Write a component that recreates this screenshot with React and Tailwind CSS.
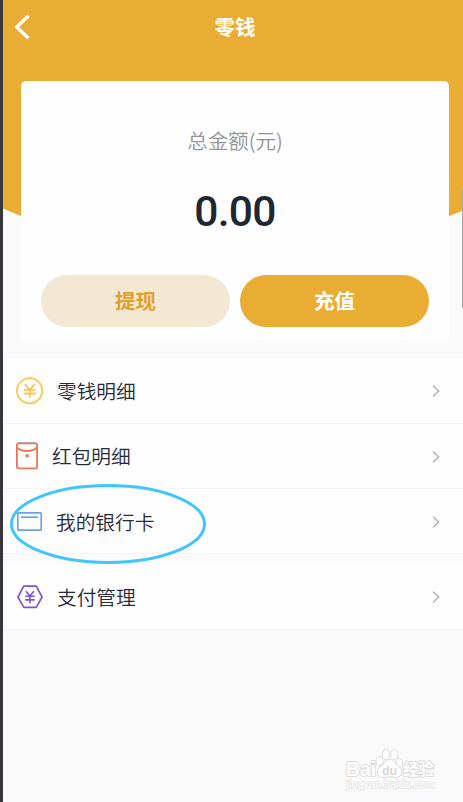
import React from "react";

function CoinIcon() {
  return (
    <svg width="28" height="28" viewBox="0 0 28 28" fill="none" stroke="#fbc54f" strokeWidth="1.8" strokeLinecap="round">
      <circle cx="13.6" cy="13.7" r="12.6" />
      <path d="M9.4 7.8 13.8 12.8 18.2 7.8M13.8 12.8V20.2M8.6 12.8H19M8.6 16.5H19" />
    </svg>
  );
}

function EnvelopeIcon() {
  return (
    <svg className="-mt-[2px]" width="22" height="28" viewBox="0 0 22 28" fill="none" stroke="#ee7556" strokeWidth="1.8">
      <rect x="0.9" y="1.4" width="20.2" height="25" rx="1.8" />
      <path d="M1 5.4C5 10.2 17 10.2 21 5.4" />
      <path d="M1.5 0.5H20.5" stroke="#b9a29c" strokeWidth="0.8" />
      <circle cx="11.2" cy="13.7" r="1.8" fill="#ee7556" stroke="none" />
    </svg>
  );
}

function CardIcon() {
  return (
    <svg className="-mt-px" width="25" height="19" viewBox="0 0 25 19" fill="none" stroke="#6aa2e8" strokeWidth="1.7">
      <rect x="0.8" y="0.8" width="23.4" height="17.4" rx="1.2" />
      <path d="M4 5.2H21" />
    </svg>
  );
}

function HexIcon() {
  return (
    <svg width="26" height="24" viewBox="0 0 26 24" fill="none" stroke="#8351d0" strokeWidth="1.6">
      <path d="M6.8 1.1H19.2L25.1 12 19.2 22.4H6.8L0.9 12Z" strokeLinejoin="round" />
      <path d="M8.9 6.2 12.9 11 16.9 6.2M12.9 11V18.4M8.2 11.3H17.7M8.2 14.9H17.7" />
    </svg>
  );
}

function Row({ icon, label, gap, className = "" }) {
  return (
    <div className={`flex items-center border-b border-[#f4f4f4] bg-[#fefefe] pr-[23px] ${className}`}>
      {icon}
      <span className={`flex-1 text-[19.7px] font-[350] leading-7 text-[#252a3a] ${gap}`}>{label}</span>
      <svg width="8" height="12" viewBox="0 0 8 12" fill="none" stroke="#a4a4a4" strokeWidth="1.2">
        <path d="M1 0.6 6.8 6 1 11.4" />
      </svg>
    </div>
  );
}

function Watermark() {
  return (
    <svg width="100" height="54" viewBox="0 0 100 54" fill="#fefefe" stroke="#dcdcdc" strokeWidth="1.8" strokeLinejoin="round" fontFamily="'Liberation Sans', 'Noto Sans CJK SC', sans-serif" fontWeight="700">
      <g style={{ paintOrder: "stroke" }}>
        <text x="6" y="33.5" fontSize="20" textLength="30" lengthAdjust="spacingAndGlyphs">Bai</text>
        <ellipse cx="39.5" cy="19" rx="3" ry="4" />
        <ellipse cx="46" cy="12.5" rx="3.2" ry="4.5" />
        <ellipse cx="54.3" cy="12.5" rx="3.2" ry="4.5" />
        <ellipse cx="59.2" cy="21" rx="3" ry="4" />
        <path d="M49.5 18C44.5 18 44 23 40 25.5C36 29 38 35 43 35C48 34 52 34 56 35C62 35 63 28 59 25C55 22 55 18 49.5 18Z" />
        <text x="42" y="32.5" fontSize="13.5" textLength="15" lengthAdjust="spacingAndGlyphs" fill="#d8d8d8" stroke="none">du</text>
        <text x="63" y="33" fontSize="15.5" textLength="31" lengthAdjust="spacingAndGlyphs">经验</text>
        <text x="6.5" y="46" fontSize="11" fontWeight="400" textLength="88" lengthAdjust="spacingAndGlyphs" strokeWidth="1.6" stroke="#e6e6e6">jingyan.baidu.com</text>
      </g>
    </svg>
  );
}

export default function App() {
  return (
    <div className="relative h-[802px] w-[463px] overflow-hidden border-l-[3px] border-[#36373b] bg-[#fafafa] font-['Noto_Sans_CJK_SC',sans-serif]">
      <div className="relative h-[358px]">
        <svg className="absolute left-0 top-0" width="460" height="260" viewBox="0 0 460 260">
          <path d="M0 0H460V210.5Q230 309 0 208.5Z" fill="#eaad33" />
        </svg>
        <header className="relative flex h-[54px] items-center justify-center pb-[2px]">
          <svg className="absolute left-[11px] top-[14px]" width="16" height="26" viewBox="0 0 16 26" fill="none" stroke="#fff" strokeWidth="3.3">
            <path d="M14.5 1.7 2.7 13 14.5 24.3" />
          </svg>
          <h1 className="pl-1 text-[20.5px] font-bold leading-7 text-white">零钱</h1>
        </header>
        <section className="relative ml-[18px] mt-[27px] h-[259px] w-[428px] rounded-[5px] bg-[#fefefe] pt-[44px] text-center">
          <p className="text-[20.5px] font-[350] leading-[30px] text-[#949494]">总金额(元)</p>
          <p className="mt-[26px] font-[Roboto,sans-serif] text-[42.5px] font-medium leading-[62px] tracking-[-0.7px] text-[#202634]">0.00</p>
          <div className="mt-[32px] flex justify-between px-5 text-[20.5px] font-bold">
            <button className="h-[52px] w-[189px] rounded-full bg-[#f3e8d2] pb-[2px] text-[#e0a02a]">提现</button>
            <button className="h-[52px] w-[189px] rounded-full bg-[#eaad33] pb-[2px] text-white">充值</button>
          </div>
        </section>
      </div>
      <Row icon={<CoinIcon />} label="零钱明细" gap="ml-[13px]" className="h-[66px] pl-[13px] pt-px" />
      <Row icon={<EnvelopeIcon />} label="红包明细" gap="ml-[14px] -mt-[2px]" className="h-[65px] pl-[13px] pt-[2px]" />
      <Row icon={<CardIcon />} label="我的银行卡" gap="ml-[14px]" className="h-[65px] pl-[14px] pt-[2px]" />
      <Row icon={<HexIcon />} label="支付管理" gap="ml-[14px]" className="mt-[10px] h-[66px] pl-[14px]" />
      <svg className="absolute left-[6px] top-[482px]" width="200" height="84" viewBox="0 0 200 84" fill="none" stroke="#3fc6fc" strokeWidth="3">
        <ellipse cx="99" cy="42" rx="96.5" ry="38.5" />
      </svg>
      <div className="absolute left-[459px] top-[190px] h-[118px] w-px rounded-full bg-[#aaa]" />
      <div className="absolute left-[337px] top-[742px]">
        <Watermark />
      </div>
    </div>
  );
}
